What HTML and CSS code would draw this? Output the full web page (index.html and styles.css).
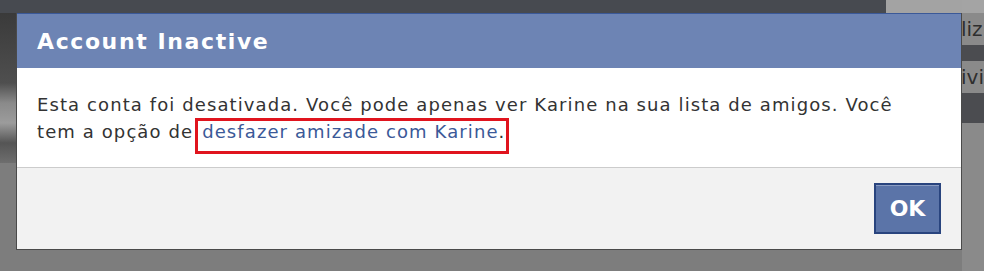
FILE: index.html
```html
<!DOCTYPE html>
<html lang="en">
<head>
    <meta charset="UTF-8">
    <meta name="viewport" content="width=device-width, initial-scale=1.0">
    <title>Account Inactive</title>
    <link rel="stylesheet" href="styles.css">
</head>
<body>
    <div class="page">
        <div class="side">
            <div class="side-top"></div>
            <div class="side-item">liz</div>
            <div class="side-band"></div>
            <div class="side-item">ivi</div>
            <div class="side-band tall"></div>
        </div>
    </div>
    <div class="dialog">
        <div class="dialog-title">Account Inactive</div>
        <div class="dialog-body">
            Esta conta foi desativada. Você pode apenas ver Karine na sua lista de amigos. Você
            tem a opção de<span class="mark"><a href="#">desfazer amizade com Karine</a>.</span>
        </div>
        <div class="dialog-footer">
            <button class="btn-ok">OK</button>
        </div>
    </div>
</body>
</html>
```

FILE: styles.css
```css
body {
    margin: 0;
    width: 984px;
    height: 271px;
    overflow: hidden;
    position: relative;
    background: #7d7d7d;
    font-family: "DejaVu Sans", Verdana, sans-serif;
}
.page {
    height: 271px;
    display: flex;
    justify-content: flex-end;
    background:
        linear-gradient(to right, transparent 0, transparent 886px, #a3a3a3 886px) 0 0 / 100% 13px no-repeat,
        linear-gradient(to bottom, #474a50 0, #474a50 13px, transparent 13px),
        linear-gradient(to bottom, #3a3a3a 0, #4f4f4f 70px, #8a8a8a 90px, #9c9c9c 110px, #555 130px, #6e6e6e 150px, transparent 150px) 0 13px / 16px 150px no-repeat,
        #7d7d7d;
}
.side {
    width: 22px;
    overflow: hidden;
    background: #8a8a8a;
    white-space: nowrap;
}
.side-top {
    height: 13px;
    background: #a4a4a4;
}
.side-item {
    height: 32px;
    line-height: 32px;
    font-size: 20px;
    color: #2e2e2e;
    margin-left: -1px;
}
.side-band {
    height: 16px;
    background: #4b4c50;
}
.side-band.tall {
    height: 30px;
}
.dialog {
    position: absolute;
    left: 16px;
    top: 13px;
    width: 946px;
    border: 1px solid #4a4a4a;
    border-top: none;
    box-sizing: border-box;
    background: #fff;
}
.dialog-title {
    height: 55px;
    line-height: 56px;
    padding: 0 20px;
    background: #6d84b4;
    border-top: 1px solid #3b5998;
    box-sizing: border-box;
    color: #fff;
    font-size: 22px;
    font-weight: bold;
    letter-spacing: 1.6px;
}
.dialog-body {
    height: 99px;
    padding: 23px 40px 0 20px;
    box-sizing: border-box;
    color: #333;
    font-size: 18px;
    letter-spacing: 1.1px;
    line-height: 27px;
}
.dialog-body a {
    color: #3b5998;
    text-decoration: none;
}
.mark {
    border: 3px solid #e0141e;
    padding: 0 1px 9px 4px;
    margin-left: 2px;
}
.dialog-footer {
    height: 82px;
    background: #f2f2f2;
    border-top: 1px solid #cccccc;
    box-sizing: border-box;
    display: flex;
    justify-content: flex-end;
    align-items: center;
    padding: 0 20px;
}
.btn-ok {
    width: 67px;
    height: 51px;
    background: #5b74a8;
    border: 2px solid #29447e;
    box-shadow: inset 0 1px 0 #8a9cc2;
    color: #fff;
    font-family: "DejaVu Sans", Verdana, sans-serif;
    font-size: 22px;
    font-weight: bold;
    cursor: pointer;
}
```
